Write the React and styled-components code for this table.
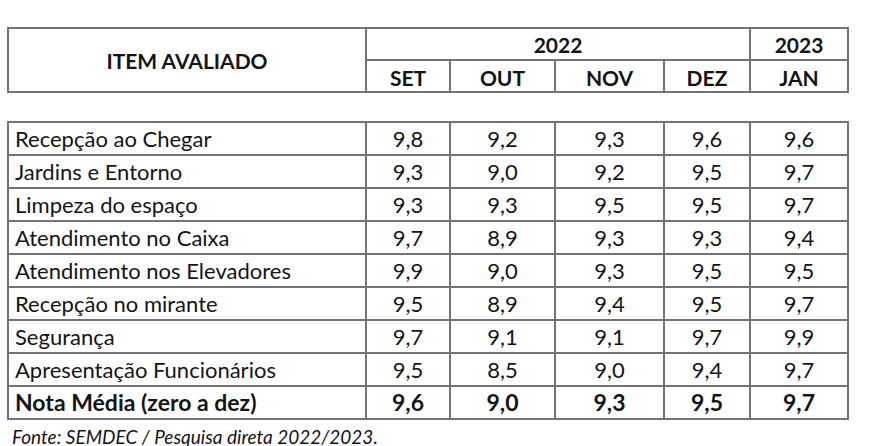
import React from "react";
import styled, { createGlobalStyle } from "styled-components";

const GlobalStyle = createGlobalStyle`
  body {
    margin: 0;
    background: #ffffff;
    font-family: Lato, "Open Sans", sans-serif;
    color: #141414;
  }
`;

const COLS = "356px 82px 103px 107px 84px 96px";
const LINE = "#737373";

const rows = [
  ["Recepção ao Chegar", "9,8", "9,2", "9,3", "9,6", "9,6"],
  ["Jardins e Entorno", "9,3", "9,0", "9,2", "9,5", "9,7"],
  ["Limpeza do espaço", "9,3", "9,3", "9,5", "9,5", "9,7"],
  ["Atendimento no Caixa", "9,7", "8,9", "9,3", "9,3", "9,4"],
  ["Atendimento nos Elevadores", "9,9", "9,0", "9,3", "9,5", "9,5"],
  ["Recepção no mirante", "9,5", "8,9", "9,4", "9,5", "9,7"],
  ["Segurança", "9,7", "9,1", "9,1", "9,7", "9,9"],
  ["Apresentação Funcionários", "9,5", "8,5", "9,0", "9,4", "9,7"],
];

const total = ["Nota Média (zero a dez)", "9,6", "9,0", "9,3", "9,5", "9,7"];

const Page = styled.div`
  padding: 27px 0 0 7px;
  width: 842px;
`;

const HeaderGrid = styled.div`
  display: grid;
  grid-template-columns: ${COLS};
  grid-template-rows: 30px 30px;
  gap: 2px;
  padding: 2px;
  background: ${LINE};
`;

const HeadCell = styled.div`
  background: #ffffff;
  display: flex;
  align-items: center;
  justify-content: center;
  font-weight: 700;
  font-size: 21px;
  padding-top: ${(p) => (p.$low ? "3px" : "0")};
  grid-row: ${(p) => p.$row || "auto"};
  grid-column: ${(p) => p.$col || "auto"};
`;

const Body = styled.div`
  margin-top: 28px;
  display: grid;
  grid-template-columns: ${COLS};
  grid-auto-rows: 31px;
  gap: 2px;
  padding: 2px;
  background: ${LINE};
`;

const Cell = styled.div`
  background: #ffffff;
  overflow: hidden;
  white-space: nowrap;
  font-size: ${(p) => (p.$bold ? "23px" : "22px")};
  line-height: 1.2;
  padding-top: ${(p) => (p.$bold ? "2px" : "3px")};
  padding-left: ${(p) => (p.$label ? "6px" : "0")};
  text-align: ${(p) => (p.$label ? "left" : "center")};
  font-weight: ${(p) => (p.$bold ? 700 : 400)};
`;

const Source = styled.div`
  font-style: italic;
  font-size: 19px;
  padding: 5px 0 0 5px;
  white-space: nowrap;
`;

const Row = ({ data, bold }) =>
  data.map((v, i) => (
    <Cell key={i} $label={i === 0} $bold={bold}>
      {v}
    </Cell>
  ));

export default function App() {
  return (
    <>
      <GlobalStyle />
      <Page>
        <HeaderGrid>
          <HeadCell $row="1 / span 2">ITEM AVALIADO</HeadCell>
          <HeadCell $col="2 / span 4">2022</HeadCell>
          <HeadCell>2023</HeadCell>
          <HeadCell $low>SET</HeadCell>
          <HeadCell $low>OUT</HeadCell>
          <HeadCell $low>NOV</HeadCell>
          <HeadCell $low>DEZ</HeadCell>
          <HeadCell $low>JAN</HeadCell>
        </HeaderGrid>
        <Body>
          {rows.map((r) => (
            <Row key={r[0]} data={r} />
          ))}
          <Row data={total} bold />
        </Body>
        <Source>Fonte: SEMDEC / Pesquisa direta 2022/2023.</Source>
      </Page>
    </>
  );
}
